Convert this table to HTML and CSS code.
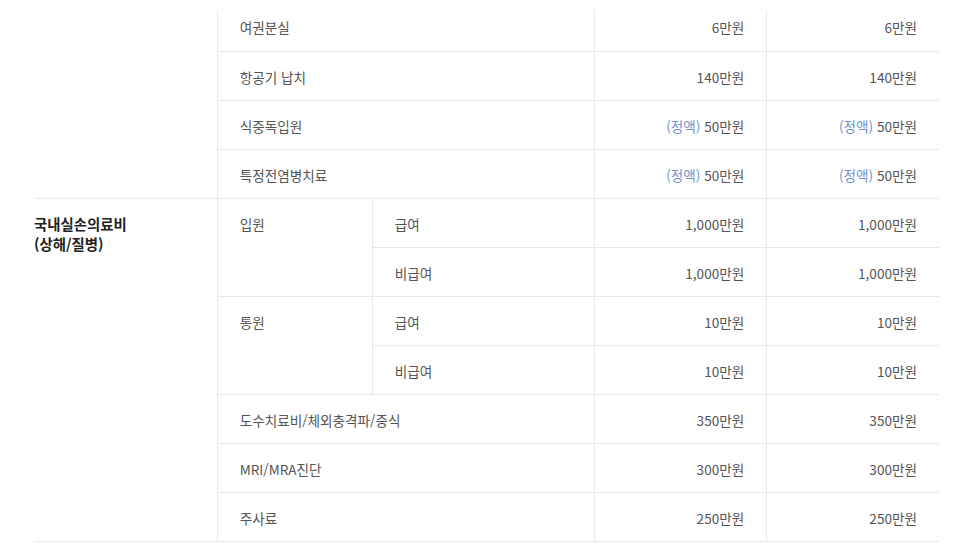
FILE: index.html
```html
<!DOCTYPE html>
<html lang="ko">
<head>
  <meta charset="UTF-8">
  <meta name="viewport" content="width=device-width, initial-scale=1.0">
  <title>보장내용</title>
  <link rel="stylesheet" href="styles.css">
</head>
<body>
  <div class="wrap">
    <table class="cover">
      <colgroup>
        <col class="c-head">
        <col class="c-sub">
        <col class="c-sub2">
        <col class="c-amt">
        <col class="c-amt">
      </colgroup>
      <tbody>
        <tr class="first">
          <th class="group" rowspan="4"></th>
          <td colspan="2">여권분실</td>
          <td class="amt">6만원</td>
          <td class="amt">6만원</td>
        </tr>
        <tr>
          <td colspan="2">항공기 납치</td>
          <td class="amt">140만원</td>
          <td class="amt">140만원</td>
        </tr>
        <tr>
          <td colspan="2">식중독입원</td>
          <td class="amt"><span class="note">(정액)</span> 50만원</td>
          <td class="amt"><span class="note">(정액)</span> 50만원</td>
        </tr>
        <tr>
          <td colspan="2">특정전염병치료</td>
          <td class="amt"><span class="note">(정액)</span> 50만원</td>
          <td class="amt"><span class="note">(정액)</span> 50만원</td>
        </tr>
        <!-- 국내실손의료비 -->
        <tr>
          <th class="group" rowspan="7">국내실손의료비<br>(상해/질병)</th>
          <td rowspan="2">입원</td>
          <td>급여</td>
          <td class="amt">1,000만원</td>
          <td class="amt">1,000만원</td>
        </tr>
        <tr>
          <td>비급여</td>
          <td class="amt">1,000만원</td>
          <td class="amt">1,000만원</td>
        </tr>
        <tr>
          <td rowspan="2">통원</td>
          <td>급여</td>
          <td class="amt">10만원</td>
          <td class="amt">10만원</td>
        </tr>
        <tr>
          <td>비급여</td>
          <td class="amt">10만원</td>
          <td class="amt">10만원</td>
        </tr>
        <tr>
          <td colspan="2">도수치료비/체외충격파/증식</td>
          <td class="amt">350만원</td>
          <td class="amt">350만원</td>
        </tr>
        <tr>
          <td colspan="2">MRI/MRA진단</td>
          <td class="amt">300만원</td>
          <td class="amt">300만원</td>
        </tr>
        <tr>
          <td colspan="2">주사료</td>
          <td class="amt">250만원</td>
          <td class="amt">250만원</td>
        </tr>
      </tbody>
    </table>
  </div>
</body>
</html>
```

FILE: styles.css
```css
body {
  margin: 0;
  font-family: "Noto Sans CJK KR", "Noto Sans", sans-serif;
  background: #fff;
}
.wrap {
  padding: 10px 27px 0 34px;
}
table.cover {
  width: 905px;
  border-collapse: collapse;
  table-layout: fixed;
}
.c-head { width: 183px; }
.c-sub { width: 155px; }
.c-sub2 { width: 222px; }
.c-amt { width: 172px; }

.cover th, .cover td {
  border-bottom: 1px solid #e8e8e8;
  vertical-align: top;
  text-align: left;
}
.cover td {
  border-left: 1px solid #e8e8e8;
  padding: 15px 22px 13px;
  font-size: 0.85rem;
  line-height: 20px;
  color: #555;
}
.cover th.group {
  padding: 15px 0 0;
  font-size: 0.9rem;
  line-height: 20px;
  font-weight: bold;
  color: #222;
}
/* 첫 줄은 위쪽이 잘려 있음 */
.cover tr.first td {
  padding-top: 7px;
  padding-bottom: 14px;
}
.cover td.amt {
  text-align: right;
}
.note {
  color: #7393cc;
}
```
